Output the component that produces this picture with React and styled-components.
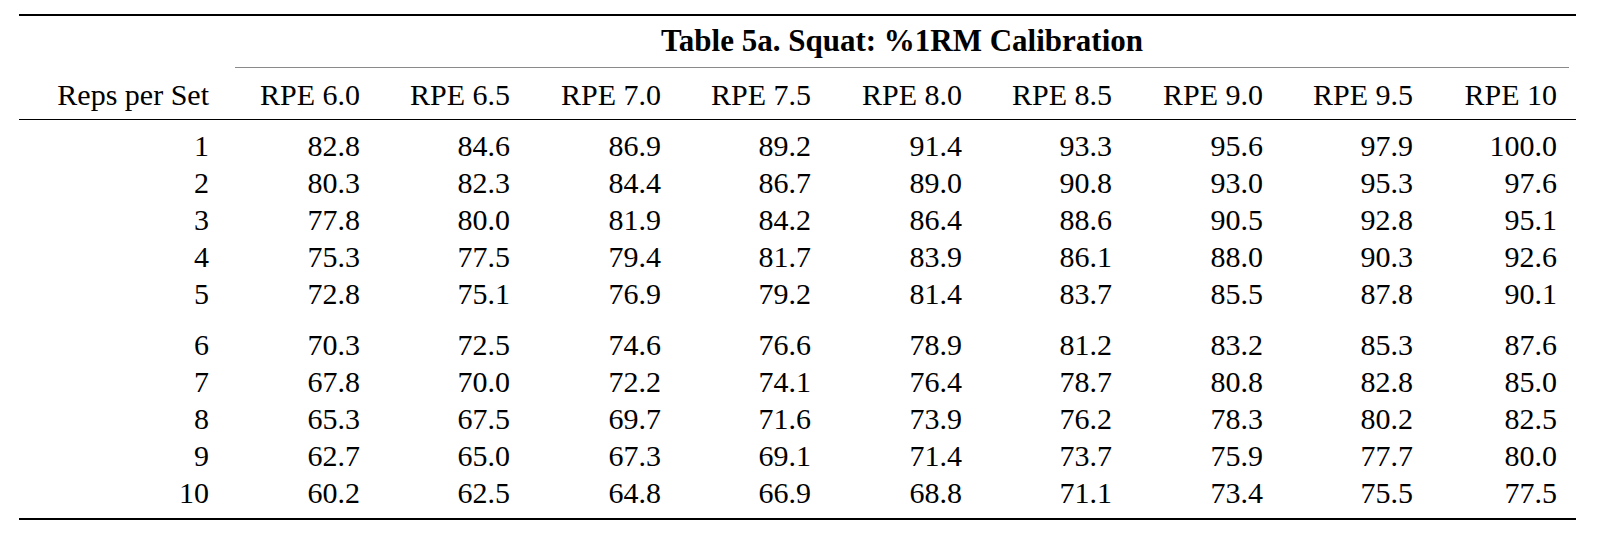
import React from 'react'
import styled, { createGlobalStyle } from 'styled-components'

const COLS = '209px 151px 150px 151px 150px 151px 150px 151px 150px 144px'

const headers = ['RPE 6.0', 'RPE 6.5', 'RPE 7.0', 'RPE 7.5', 'RPE 8.0', 'RPE 8.5', 'RPE 9.0', 'RPE 9.5', 'RPE 10']

const rows = [
  [1, '82.8', '84.6', '86.9', '89.2', '91.4', '93.3', '95.6', '97.9', '100.0'],
  [2, '80.3', '82.3', '84.4', '86.7', '89.0', '90.8', '93.0', '95.3', '97.6'],
  [3, '77.8', '80.0', '81.9', '84.2', '86.4', '88.6', '90.5', '92.8', '95.1'],
  [4, '75.3', '77.5', '79.4', '81.7', '83.9', '86.1', '88.0', '90.3', '92.6'],
  [5, '72.8', '75.1', '76.9', '79.2', '81.4', '83.7', '85.5', '87.8', '90.1'],
  [6, '70.3', '72.5', '74.6', '76.6', '78.9', '81.2', '83.2', '85.3', '87.6'],
  [7, '67.8', '70.0', '72.2', '74.1', '76.4', '78.7', '80.8', '82.8', '85.0'],
  [8, '65.3', '67.5', '69.7', '71.6', '73.9', '76.2', '78.3', '80.2', '82.5'],
  [9, '62.7', '65.0', '67.3', '69.1', '71.4', '73.7', '75.9', '77.7', '80.0'],
  [10, '60.2', '62.5', '64.8', '66.9', '68.8', '71.1', '73.4', '75.5', '77.5'],
]

const GlobalStyle = createGlobalStyle`
  body {
    margin: 0;
    background: #fff;
  }
`

const Page = styled.div`
  padding: 14px 0 0 19px;
`

const Table = styled.div`
  width: 1557px;
`

const Rule = styled.div`
  height: ${p => p.$thick}px;
  background: #000;
  margin-top: ${p => p.$top || 0}px;
`

const Row = styled.div`
  display: grid;
  grid-template-columns: ${COLS};
  margin-top: ${p => p.$top || 0}px;
`

const Title = styled.div`
  grid-column: 2 / -1;
  text-align: center;
  font-family: "Liberation Serif", serif;
  font-size: 31px;
  line-height: 37px;
  font-weight: 700;
  white-space: nowrap;
`

const Cmid = styled.div`
  grid-column: 2 / -1;
  height: 1px;
  background: #8a8a8a;
  margin: 8px 7px 0;
`

const Cell = styled.div`
  text-align: right;
  padding: 0 19px;
  font-family: "Liberation Serif", serif;
  font-size: 30px;
  line-height: 37px;
  white-space: nowrap;
`

export default function App() {
  return (
    <Page>
      <GlobalStyle />
      <Table>
        <Rule $thick={2} />
        <Row $top={6}>
          <Title>Table 5a. Squat: %1RM Calibration</Title>
        </Row>
        <Row>
          <Cmid />
        </Row>
        <Row $top={8}>
          <Cell>Reps per Set</Cell>
          {headers.map(h => (
            <Cell key={h}>{h}</Cell>
          ))}
        </Row>
        <Rule $thick={1} $top={6} />
        {rows.map((r, i) => (
          <Row key={r[0]} $top={i === 0 ? 7 : i === 5 ? 14 : 0}>
            {r.map((v, j) => (
              <Cell key={j}>{v}</Cell>
            ))}
          </Row>
        ))}
        <Rule $thick={2} $top={7} />
      </Table>
    </Page>
  )
}
